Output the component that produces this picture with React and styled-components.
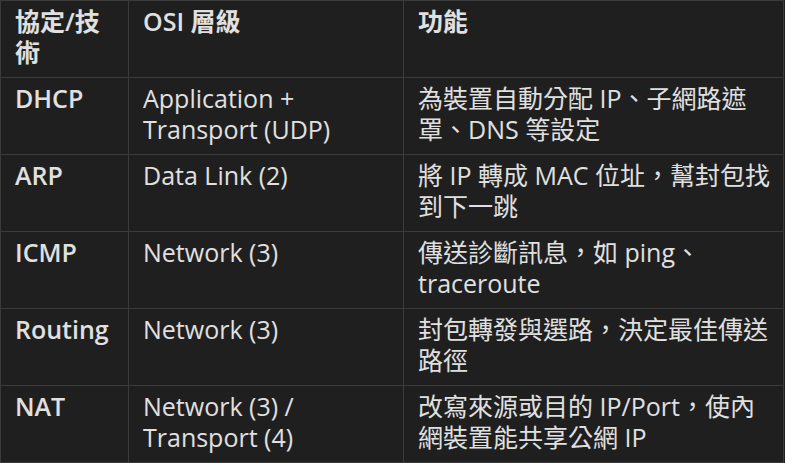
import styled, { createGlobalStyle } from "styled-components";

// role text is kept as the lines shown in the screenshot
const rows = [
  {
    name: "DHCP",
    layer: "Application + Transport (UDP)",
    role: ["為裝置自動分配 IP、子網路遮", "罩、DNS 等設定"],
  },
  {
    name: "ARP",
    layer: "Data Link (2)",
    role: ["將 IP 轉成 MAC 位址，幫封包找", "到下一跳"],
  },
  {
    name: "ICMP",
    layer: "Network (3)",
    role: ["傳送診斷訊息，如 ping、", "traceroute"],
  },
  {
    name: "Routing",
    layer: "Network (3)",
    role: ["封包轉發與選路，決定最佳傳送", "路徑"],
  },
  {
    name: "NAT",
    layer: "Network (3) / Transport (4)",
    role: ["改寫來源或目的 IP/Port，使內", "網裝置能共享公網 IP"],
  },
];

const GlobalStyle = createGlobalStyle`
  html, body {
    margin: 0;
    padding: 0;
    background: #1f1f1f;
    overflow: hidden;
  }
`;

const App = () => {
  return (
    <>
      <GlobalStyle />
      <Table>
        <colgroup>
          <col style={{ width: 128 }} />
          <col style={{ width: 275 }} />
          <col style={{ width: 380 }} />
        </colgroup>
        <thead>
          <tr>
            <Head>協定/技術</Head>
            <Head>OSI 層級</Head>
            <Head>功能</Head>
          </tr>
        </thead>
        <tbody>
          {rows.map((row) => (
            <tr key={row.name}>
              <Cell $strong>{row.name}</Cell>
              <Cell>{row.layer}</Cell>
              <Cell>
                {row.role.map((line) => (
                  <Line key={line}>{line}</Line>
                ))}
              </Cell>
            </tr>
          ))}
        </tbody>
      </Table>
    </>
  );
};

export default App;

const Table = styled.table`
  width: 783px;
  table-layout: fixed;
  border-collapse: collapse;
  background: #1f1f1f;
  color: #e0e0e0;
  font-family: "Open Sans", "Noto Sans CJK TC", sans-serif;
  font-size: 25px;
  line-height: 31px;
`;

const Head = styled.th`
  border: 1px solid #3b3b3b;
  padding: 5px 14px 9px;
  text-align: left;
  vertical-align: top;
  font-weight: 600;
`;

const Cell = styled.td`
  border: 1px solid #3b3b3b;
  padding: 5px 14px 9px;
  vertical-align: top;
  font-weight: ${(p) => (p.$strong ? 600 : 400)};
`;

const Line = styled.span`
  display: block;
  white-space: nowrap;
`;
